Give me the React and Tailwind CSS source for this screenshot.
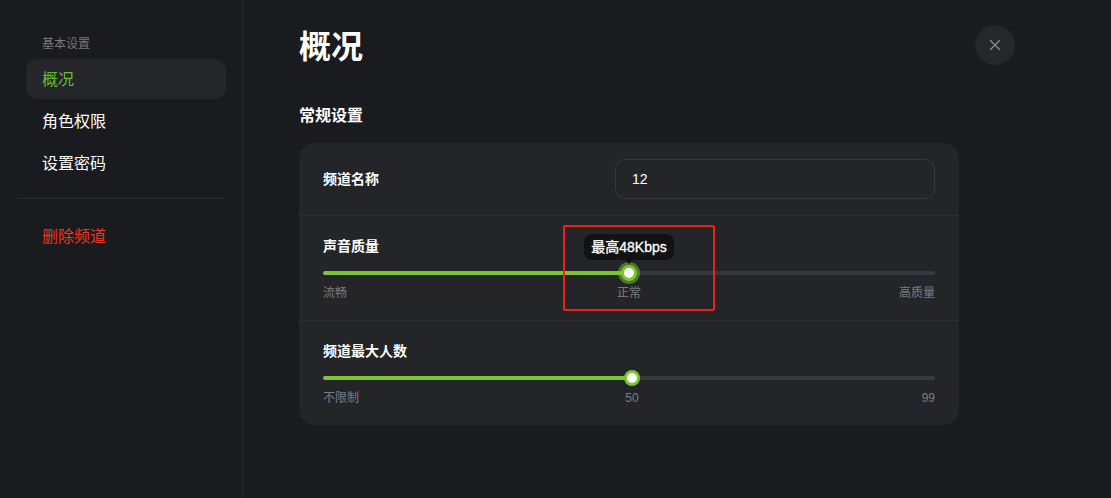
import React from "react";

const font = { fontFamily: '"Liberation Sans", "Noto Sans CJK SC", sans-serif' };

function Slider({ pct, halo, tooltip, labels }) {
  return (
    <div className="relative">
      <div className="relative h-[20px] flex items-center">
        <div className="h-[4px] w-full rounded-full bg-[#37383c]" />
        <div
          className="absolute left-0 h-[4px] rounded-full bg-[#7bc631]"
          style={{ width: `${pct}%` }}
        />
        <div
          className="absolute top-1/2 -translate-x-1/2 -translate-y-1/2 flex items-center justify-center"
          style={{ left: `${pct}%` }}
        >
          {halo && (
            <div className="absolute w-[22px] h-[22px] rounded-full bg-[#7bc631]/50" />
          )}
          <div className="relative w-[16px] h-[16px] rounded-full bg-white border-[3px] border-[#7bc631]" />
          {tooltip && (
            <div className="absolute bottom-[17px] flex flex-col items-center">
              <div className="whitespace-nowrap rounded-[8px] bg-[#121214] px-[7px] h-[26px] flex items-center text-[14px] text-white [-webkit-text-stroke:0.3px_white]">
                {tooltip}
              </div>
              <div className="w-0 h-0 border-l-[4px] border-r-[4px] border-t-[4px] border-l-transparent border-r-transparent border-t-[#121214]" />
            </div>
          )}
        </div>
      </div>
      <div className="relative h-[20px] mt-[1px] text-[12px] text-[#7c7d80]">
        <span className="absolute left-0 top-0">{labels[0]}</span>
        <span
          className="absolute top-0 -translate-x-1/2"
          style={{ left: `${pct}%` }}
        >
          {labels[1]}
        </span>
        <span className="absolute right-0 top-0">{labels[2]}</span>
      </div>
    </div>
  );
}

export default function App() {
  return (
    <div
      className="w-[1111px] h-[498px] flex bg-[#1a1b1e] text-white overflow-hidden"
      style={font}
    >
      {/* Sidebar */}
      <aside className="w-[243px] shrink-0 border-r border-[#26272b] pt-[35px] pl-[18px] pr-[16px]">
        <div className="pl-[24px] text-[12px] leading-[18px] text-[#77787c]">基本设置</div>
        <nav className="mt-[6px] flex flex-col gap-[2px] pl-[8px]">
          <div className="h-[40px] rounded-[12px] bg-[#25262a] flex items-center pl-[16px] pt-[2px] text-[16px] text-[#6dbb2f]">
            概况
          </div>
          <div className="h-[40px] flex items-center pl-[16px] pt-[2px] text-[16px] text-white">角色权限</div>
          <div className="h-[40px] flex items-center pl-[16px] pt-[2px] text-[16px] text-white">设置密码</div>
        </nav>
        <div className="mt-[15px] h-px bg-[#2a2b2f]" />
        <div className="mt-[17px] pl-[24px] h-[40px] flex items-center pt-[2px] text-[16px] text-[#f0321e]">
          删除频道
        </div>
      </aside>

      {/* Main */}
      <main className="flex-1 pl-[56px] pr-[96px] pt-[25px] relative">
        <div className="flex items-start justify-between w-[716px]">
          <h1 className="text-[32px] leading-[44px] font-bold">概况</h1>
          <button className="mt-[0px] w-[40px] h-[40px] rounded-full bg-[#26272b] flex items-center justify-center">
            <svg width="12" height="12" viewBox="0 0 12 12" fill="none" stroke="#8a8b8f" strokeWidth="1.4" strokeLinecap="round">
              <path d="M1.5 1.5L10.5 10.5M10.5 1.5L1.5 10.5" />
            </svg>
          </button>
        </div>
        <h2 className="mt-[36px] text-[16px] leading-[22px] font-bold">常规设置</h2>

        <div className="mt-[16px] w-[660px] rounded-[16px] bg-[#242529]">
          {/* Row 1 */}
          <div className="h-[73px] px-[24px] flex items-center justify-between border-b border-[#2e2f33]">
            <span className="text-[14px] font-semibold">频道名称</span>
            <div className="w-[320px] h-[40px] rounded-[10px] border border-[#37383c] flex items-center px-[16px] text-[14px]">
              12
            </div>
          </div>
          {/* Row 2 */}
          <div className="h-[105px] px-[24px] pt-[20px] border-b border-[#2e2f33]">
            <div className="text-[14px] leading-[20px] font-semibold">声音质量</div>
            <div className="mt-[7px]">
              <Slider pct={50} halo tooltip="最高48Kbps" labels={["流畅", "正常", "高质量"]} />
            </div>
          </div>
          {/* Row 3 */}
          <div className="h-[104px] px-[24px] pt-[20px]">
            <div className="text-[14px] leading-[20px] font-semibold">频道最大人数</div>
            <div className="mt-[7px]">
              <Slider pct={50.5} labels={["不限制", "50", "99"]} />
            </div>
          </div>
        </div>

        {/* annotation box */}
        <div className="absolute left-[320px] top-[225px] w-[152px] h-[86px] border-2 border-[#f0201a] rounded-[2px] pointer-events-none" />
      </main>
    </div>
  );
}
